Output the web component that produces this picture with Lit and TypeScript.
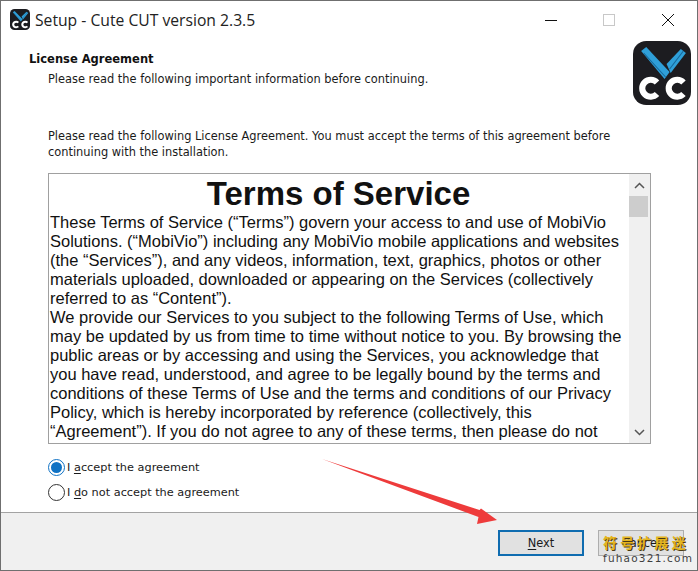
import { LitElement, html, css, svg } from "lit";
import { customElement } from "lit/decorators.js";

const logo = (size: number, h: number) => html`<svg width=${size} height=${h} viewBox="0 0 57 64" preserveAspectRatio="none">
  <rect x="0" y="0" width="57" height="64" rx="13" fill="#1c1c20"/>
  <path d="M8 10 L13 6 L36 31 L31 38 Z" fill="#2f9fd8"/>
  <path d="M33 23 L47 8 L52 12 L37 32 Z" fill="#2f9fd8"/>
  <path d="M10.5 12 L32 36 M36 28 L49.5 10" stroke="#17699a" stroke-width="1.1" fill="none"/>
  <path d="M23.6 41.5 A8.4 8.4 0 1 0 23.6 53" fill="none" stroke="#fff" stroke-width="6"/>
  <path d="M49.6 41.5 A8.4 8.4 0 1 0 49.6 53" fill="none" stroke="#fff" stroke-width="6"/>
</svg>`;

const para = [
  "These Terms of Service (“Terms”) govern your access to and use of MobiVio",
  "Solutions. (“MobiVio”) including any MobiVio mobile applications and websites",
  "(the “Services”), and any videos, information, text, graphics, photos or other",
  "materials uploaded, downloaded or appearing on the Services (collectively",
  "referred to as “Content”).",
  "We provide our Services to you subject to the following Terms of Use, which",
  "may be updated by us from time to time without notice to you. By browsing the",
  "public areas or by accessing and using the Services, you acknowledge that",
  "you have read, understood, and agree to be legally bound by the terms and",
  "conditions of these Terms of Use and the terms and conditions of our Privacy",
  "Policy, which is hereby incorporated by reference (collectively, this",
  "“Agreement”). If you do not agree to any of these terms, then please do not",
];

@customElement("app-root")
export class AppRoot extends LitElement {
  static styles = css`
    :host {
      display: block;
      width: 698px;
      height: 571px;
      overflow: hidden;
    }
    * { box-sizing: border-box; }
    .win {
      position: relative;
      width: 698px;
      height: 571px;
      border: 1px solid #6f6f6f;
      background: #fff;
      display: flex;
      flex-direction: column;
      font-family: "DejaVu Sans", sans-serif;
      font-size: 11.4px;
      color: #1a1a1a;
    }
    .title {
      height: 37px;
      padding-left: 9px;
      display: flex;
      align-items: center;
      gap: 5px;
      font-family: "Open Sans", sans-serif;
      font-size: 15.7px;
      color: #222;
      flex: none;
    }
    .title .t { flex: 1; }
    .caps { display: flex; align-items: center; height: 37px; }
    .cap { width: 58.5px; height: 37px; display: flex; align-items: center; justify-content: center; }
    .head {
      flex: none;
      height: 135px;
      display: flex;
      justify-content: space-between;
      padding: 0 6px 0 28px;
    }
    .h1 { font-weight: 700; font-size: 11.5px; line-height: 16px; margin-top: 13px; color: #111; }
    .sub { margin: 4px 0 0 19px; line-height: 16px; }
    .intro { margin: 41px 0 0 19px; line-height: 16px; }
    .logo { margin-top: 3px; }
    .memo {
      flex: none;
      margin-left: 47px;
      width: 603px;
      height: 271px;
      border: 1px solid #a0a0a0;
      display: flex;
      overflow: hidden;
    }
    .doc {
      flex: 1;
      min-width: 0;
      padding: 1px 0 0 1px;
      font-family: "Liberation Sans", sans-serif;
      font-size: 16.5px;
      line-height: 19px;
      color: #111;
      white-space: nowrap;
      overflow: hidden;
    }
    .doc h1 {
      margin: 0;
      text-align: center;
      font-size: 33px;
      line-height: 38px;
      font-weight: 700;
      padding-right: 2px;
    }
    .sb {
      flex: none;
      width: 21px;
      background: #f0f0f0;
      display: flex;
      flex-direction: column;
      align-items: center;
      justify-content: space-between;
      position: relative;
    }
    .btn { width: 100%; height: 22px; display: flex; align-items: center; justify-content: center; }
    .thumb { position: absolute; left: 0; top: 22px; width: 19px; height: 21px; background: #cdcdcd; }
    .radios { flex: none; height: 68px; padding: 11px 0 0 47px; font-size: 11.3px; }
    .r { display: flex; align-items: center; height: 25px; gap: 2px; }
    .dot {
      width: 17px; height: 17px; border-radius: 50%; border: 1px solid #333; background: #fff; flex: none;
      display: flex; align-items: center; justify-content: center;
    }
    .dot.on { border: 1.5px solid #0f72c4; }
    .dot.on::after { content: ""; width: 11px; height: 11px; border-radius: 50%; background: #0f72c4; }
    u { text-underline-offset: 2px; }
    .foot {
      flex: 1;
      background: #f0f0f0;
      border-top: 1px solid #a3a3a3;
      display: flex;
      justify-content: flex-end;
      gap: 14px;
      padding: 17px 13px 0 0;
    }
    .b {
      width: 86px; height: 26px;
      background: #e1e1e1;
      border: 1px solid #adadad;
      display: flex; align-items: center; justify-content: center;
    }
    .b.def { border: 2px solid #0f6cb0; }
    .arrow { position: absolute; left: -1px; top: -1px; pointer-events: none; }
    .wm {
      position: absolute;
      left: 602px;
      top: 532px;
      width: 90px;
      pointer-events: none;
    }
    .wm .a {
      font-family: "Noto Sans CJK SC", sans-serif;
      font-weight: 700;
      font-size: 14px;
      line-height: 19px;
      color: #e4b520;
      white-space: nowrap;
      text-shadow: 1px 1px 0 #4a3a10;
    }
    .wm .c {
      font-family: "DejaVu Sans", sans-serif;
      font-size: 10.5px;
      line-height: 11px;
      letter-spacing: 1.2px;
      color: #3e3e3e;
      white-space: nowrap;
      margin-top: 1px;
    }
  `;

  render() {
    return html`<div class="win">
      <div class="title">
        ${logo(20, 21)}
        <span class="t">Setup - Cute CUT version 2.3.5</span>
        <div class="caps">
          <div class="cap"><svg width="14" height="14"><path d="M1 7.5H13" stroke="#111" stroke-width="1"/></svg></div>
          <div class="cap"><svg width="14" height="14"><rect x="1.5" y="1.5" width="11" height="11" fill="none" stroke="#c8c8c8"/></svg></div>
          <div class="cap"><svg width="14" height="14"><path d="M1 1L13 13M13 1L1 13" stroke="#111" stroke-width="1"/></svg></div>
        </div>
      </div>
      <div class="head">
        <div>
          <div class="h1">License Agreement</div>
          <div class="sub">Please read the following important information before continuing.</div>
          <div class="intro">Please read the following License Agreement. You must accept the terms of this agreement before<br>continuing with the installation.</div>
        </div>
        <div class="logo">${logo(58, 64)}</div>
      </div>
      <div class="memo">
        <div class="doc">
          <h1>Terms of Service</h1>
          ${para.map((l) => html`<div>${l}</div>`)}
        </div>
        <div class="sb">
          <div class="btn"><svg width="11" height="7">${svg`<path d="M1 6L5.5 1.5L10 6" fill="none" stroke="#555" stroke-width="1.5"/>`}</svg></div>
          <div class="thumb"></div>
          <div class="btn"><svg width="11" height="7">${svg`<path d="M1 1L5.5 5.5L10 1" fill="none" stroke="#555" stroke-width="1.5"/>`}</svg></div>
        </div>
      </div>
      <div class="radios">
        <div class="r"><span class="dot on"></span><span>I <u>a</u>ccept the agreement</span></div>
        <div class="r"><span class="dot"></span><span>I <u>d</u>o not accept the agreement</span></div>
      </div>
      <div class="foot">
        <div class="b def"><span><u>N</u>ext</span></div>
        <div class="b">Cancel</div>
      </div>
      <svg class="arrow" width="698" height="571">
        <path d="M322 459 L479.5 510 L481 508.5 L497 520 L477 524 L478.5 517 Z" fill="#ee3b3b"/>
      </svg>
      <div class="wm">
        <div class="a">符 号 扩 展 迷</div>
        <div class="c">fuhao321.com</div>
      </div>
    </div>`;
  }
}
